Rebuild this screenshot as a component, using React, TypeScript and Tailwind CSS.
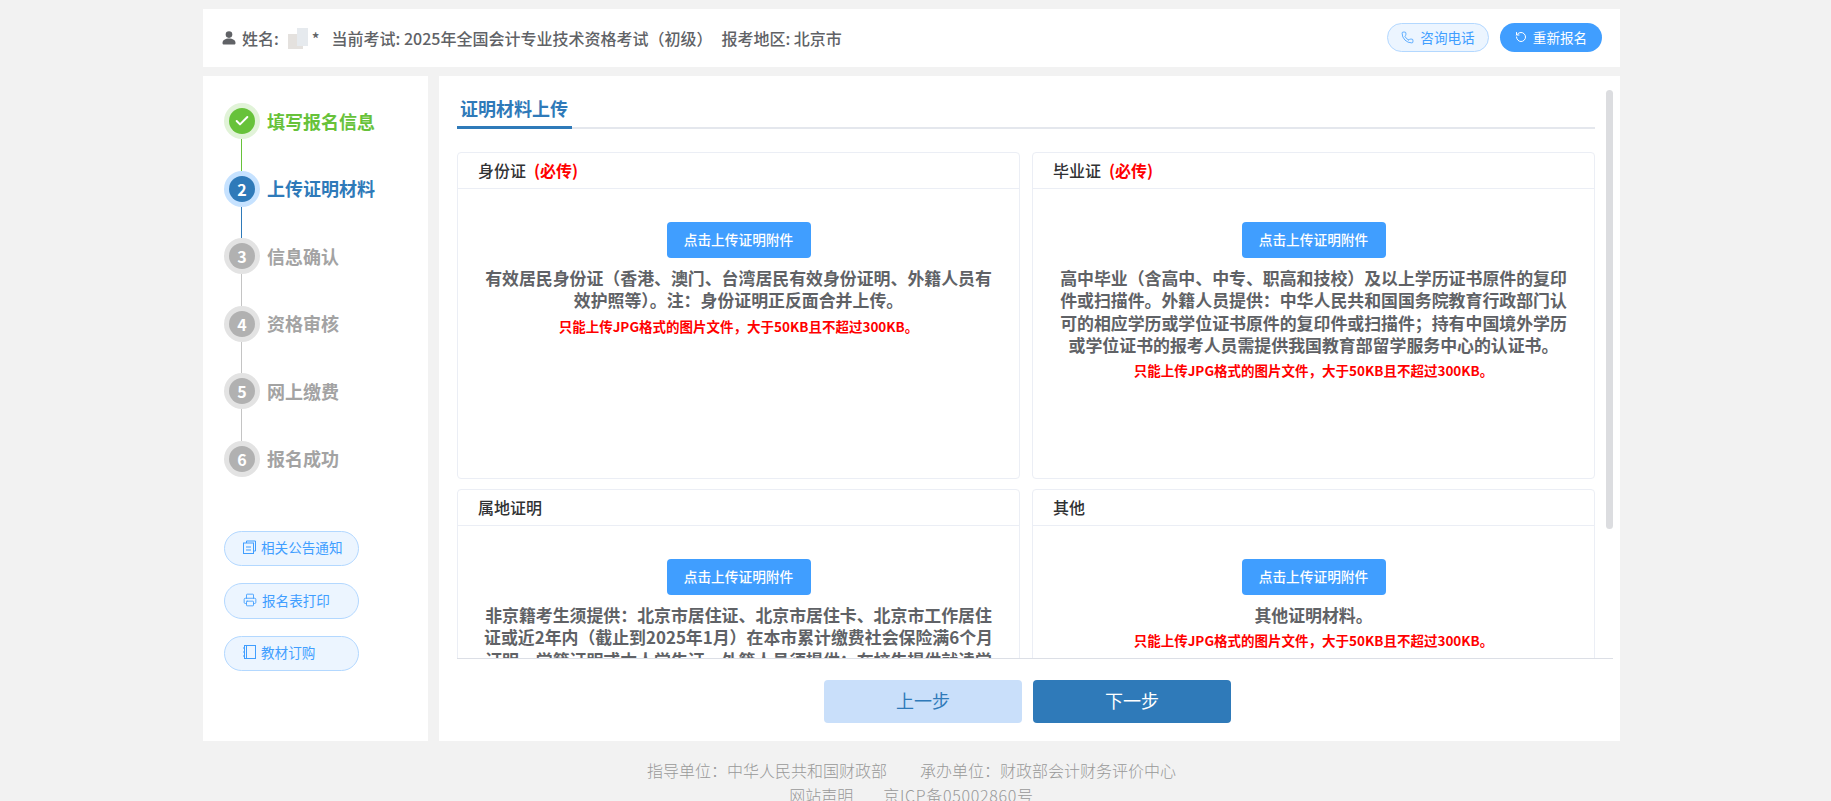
import { Phone, Printer, RotateCcw, Check } from "lucide-react";

const steps = [
  { label: "填写报名信息", state: "done" },
  { label: "上传证明材料", state: "current" },
  { label: "信息确认", state: "todo" },
  { label: "资格审核", state: "todo" },
  { label: "网上缴费", state: "todo" },
  { label: "报名成功", state: "todo" },
];

const stepStyles: Record<string, { ring: string; dot: string; text: string; line: string }> = {
  done: { ring: "bg-[#e1f3d8]", dot: "bg-[#67c23a]", text: "text-[#67c23a]", line: "bg-[#67c23a]" },
  current: { ring: "bg-[#c6e2ff]", dot: "bg-[#2f7ab9]", text: "text-[#2f7ab9]", line: "bg-[#2f7ab9]" },
  todo: { ring: "bg-[#e3e3e3]", dot: "bg-[#b1b1b1]", text: "text-[#a3a3a3]", line: "bg-[#c4c4c4]" },
};

const materials = [
  {
    title: "身份证",
    required: true,
    desc: "有效居民身份证（香港、澳门、台湾居民有效身份证明、外籍人员有效护照等）。注：身份证明正反面合并上传。",
  },
  {
    title: "毕业证",
    required: true,
    desc: "高中毕业（含高中、中专、职高和技校）及以上学历证书原件的复印件或扫描件。外籍人员提供：中华人民共和国国务院教育行政部门认可的相应学历或学位证书原件的复印件或扫描件；持有中国境外学历或学位证书的报考人员需提供我国教育部留学服务中心的认证书。",
  },
  {
    title: "属地证明",
    required: false,
    desc: "非京籍考生须提供：北京市居住证、北京市居住卡、北京市工作居住证或近2年内（截止到2025年1月）在本市累计缴费社会保险满6个月证明、学籍证明或本人学生证。外籍人员须提供：在校生提供就读学校证明。",
  },
  { title: "其他", required: false, desc: "其他证明材料。" },
];

function PersonIcon() {
  return (
    <svg width="14" height="14" viewBox="0 0 14 14" fill="currentColor" className="mr-[6px]">
      <circle cx="7" cy="3.6" r="3.3" />
      <path d="M0.5 12c0-3 2.8-4.6 6.5-4.6s6.5 1.6 6.5 4.6c0 1-.6 1.6-1.5 1.6H2c-.9 0-1.5-.6-1.5-1.6z" />
    </svg>
  );
}

function NoticeIcon() {
  return (
    <svg width="13" height="14" viewBox="0 0 13 14" fill="none" stroke="currentColor" strokeWidth="1">
      <path d="M3.5 3V1h9v10h-2" />
      <rect x="0.5" y="3" width="10" height="10.5" />
      <path d="M3 7h5M3 10h5" />
    </svg>
  );
}

function BookIcon() {
  return (
    <svg width="13" height="14" viewBox="0 0 13 14" fill="none" stroke="currentColor" strokeWidth="1">
      <rect x="1.5" y="0.5" width="11" height="13" />
      <path d="M3.5 1v12M0 3h2M0 7h2M0 11h2" />
    </svg>
  );
}

function SideLink({ icon, label }: { icon: React.ReactNode; label: string }) {
  return (
    <a className="flex h-[35.5px] w-[135px] items-center gap-[5px] rounded-full border border-[#b3d8ff] bg-[#ecf5ff] pb-[3px] pl-[18px] text-[13.6px] text-[#409eff]">
      {icon}
      {label}
    </a>
  );
}

export default function App() {
  return (
    <div className="h-[801px] overflow-hidden bg-[#f2f2f2] pl-[203px] pt-[9px] font-['Noto_Sans_CJK_SC',sans-serif]">
      <div className="w-[1417px]">
        <div className="flex h-[58px] items-center bg-white pl-[19px] pr-[18px] text-[16px] font-medium text-[#606266]">
          <PersonIcon />
          <span>姓名:</span>
          <span className="relative ml-[9px] mr-[1px] flex h-[21px] w-[23px]">
            <span className="absolute bottom-0 left-0 h-[15px] w-[15px] bg-[#e4e1de]" />
            <span className="absolute right-[3px] top-0 h-[18px] w-[11px] bg-[#e6eaee]" />
          </span>
          <span>*</span>
          <span className="ml-[12px]">当前考试: 2025年全国会计专业技术资格考试（初级）</span>
          <span className="ml-[9px]">报考地区: 北京市</span>
          <div className="mb-[1px] ml-auto flex gap-[11px] text-[13.6px] font-normal">
            <button className="flex h-[29px] w-[102px] items-center justify-center gap-[6px] rounded-full border border-[#b3d8ff] bg-[#ecf5ff] pb-[1px] text-[#409eff]">
              <Phone size={13} strokeWidth={1.5} />
              咨询电话
            </button>
            <button className="flex h-[29px] w-[102px] items-center justify-center gap-[6px] rounded-full bg-[#409eff] pb-[1px] text-white">
              <RotateCcw size={12} strokeWidth={2} />
              重新报名
            </button>
          </div>
        </div>

        <div className="mt-[9px] flex h-[665px] gap-[11px]">
          <aside className="w-[225px] bg-white pl-[21px] pt-[27px]">
            <ul>
              {steps.map((s, i) => {
                const st = stepStyles[s.state];
                return (
                  <li key={s.label}>
                    <div className="flex h-[36px] items-center gap-[7px]">
                      <span className={`flex h-[36px] w-[36px] items-center justify-center rounded-full ${st.ring}`}>
                        <span className={`flex h-[26px] w-[26px] items-center justify-center rounded-full text-[16px] font-bold text-white ${st.dot}`}>
                          {s.state === "done" ? <Check size={16} strokeWidth={3} /> : i + 1}
                        </span>
                      </span>
                      <span className={`text-[18px] font-bold ${st.text}`}>{s.label}</span>
                    </div>
                    {i < steps.length - 1 && <div className={`ml-[17px] h-[31.6px] w-px ${st.line}`} />}
                  </li>
                );
              })}
            </ul>
            <div className="mt-[54px] flex flex-col gap-[17px]">
              <SideLink icon={<NoticeIcon />} label="相关公告通知" />
              <SideLink icon={<Printer size={14} strokeWidth={1.5} />} label="报名表打印" />
              <SideLink icon={<BookIcon />} label="教材订购" />
            </div>
          </aside>

          <main className="relative w-[1181px] bg-white pl-[18px] pt-[14px]">
            <div className="h-[569px] w-[1156px] overflow-hidden border-b border-[#dcdfe6] pr-[18px]">
              <div className="h-[39px] border-b-[2px] border-[#e4e7ed]">
                <div className="h-[39px] w-[115px] border-b-[3px] border-[#2f7ab9] pl-[3px] pt-[3.5px] text-[18px] font-bold leading-[28px] text-[#2f7ab9]">
                  证明材料上传
                </div>
              </div>
              <div className="mt-[23px] grid grid-cols-2 gap-x-[12px] gap-y-[10px]">
                {materials.map((m) => (
                  <section key={m.title} className="h-[327px] shrink-0 rounded-[4px] border border-[#ebeef5]">
                    <header className="flex h-[35.5px] items-center border-b border-[#ebeef5] pl-[20px] text-[16px] font-medium text-[#303133]">
                      {m.title}
                      {m.required && <span className="ml-2 font-bold text-[#ff0000]">(必传)</span>}
                    </header>
                    <div className="flex flex-col items-center px-[19px] pt-[33.5px]">
                      <button className="h-[36px] w-[144px] rounded-[4px] bg-[#409eff] pb-[2px] text-[13.7px] font-medium text-white">
                        点击上传证明附件
                      </button>
                      <p className="mt-[9px] text-center text-[16.9px] font-bold leading-[22.3px] text-[#606266]">{m.desc}</p>
                      <p className="mt-[4px] text-[13.5px] font-bold leading-[20px] text-[#ff0000]">
                        只能上传JPG格式的图片文件，大于50KB且不超过300KB。
                      </p>
                    </div>
                  </section>
                ))}
              </div>
            </div>
            <div className="absolute right-[7px] top-[14px] h-[439px] w-[7px] rounded-full bg-[#dcdde0]" />
            <div className="ml-[367px] mt-[21px] flex gap-[11px] text-[18px]">
              <button className="h-[43px] w-[198px] rounded-[4px] bg-[#c9dffa] pb-[3px] text-[#2f7ab9]">上一步</button>
              <button className="h-[43px] w-[198px] rounded-[4px] bg-[#2f7ab9] pb-[3px] text-white">下一步</button>
            </div>
          </main>
        </div>

        <footer className="mt-[17px] text-center text-[16px] font-light leading-[24.5px] text-[#999999]">
          <p>
            <span>指导单位：中华人民共和国财政部</span>
            <span className="ml-[33px]">承办单位：财政部会计财务评价中心</span>
          </p>
          <p>
            <span>网站声明</span>
            <span className="ml-[30px] tracking-[0.7px]">京ICP备05002860号</span>
          </p>
        </footer>
      </div>
    </div>
  );
}
